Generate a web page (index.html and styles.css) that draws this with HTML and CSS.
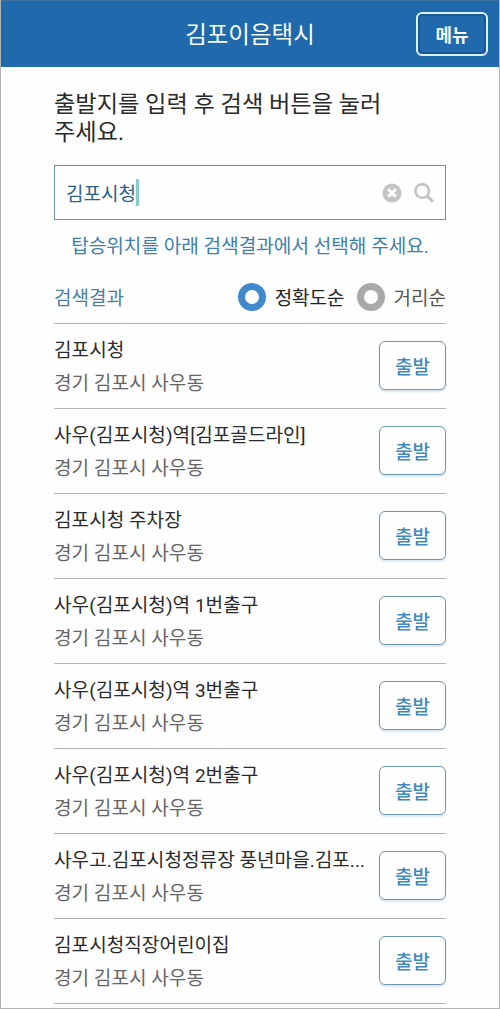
FILE: index.html
```html
<!DOCTYPE html>
<html lang="ko">
<head>
  <meta charset="UTF-8">
  <title>김포이음택시</title>
  <meta name="viewport" content="width=device-width, initial-scale=1.0">
  <link rel="stylesheet" href="styles.css">
</head>
<body>
  <header>
    <h1>김포이음택시</h1>
    <button class="menu-btn">메뉴</button>
  </header>

  <main>
    <p class="guide">출발지를 입력 후 검색 버튼을 눌러<br>주세요.</p>

    <div class="search-box">
      <span class="keyword">김포시청</span>
      <span class="caret"></span>
      <svg class="icon-clear" viewBox="0 0 20 20" width="20" height="20">
        <circle cx="10" cy="10" r="9.6" fill="#c4c4c4"/>
        <path d="M6.2 6.2L13.8 13.8M13.8 6.2L6.2 13.8" stroke="#fff" stroke-width="3"/>
      </svg>
      <svg class="icon-search" viewBox="0 0 20 20" width="20" height="20" fill="none" stroke="#c4c4c4">
        <circle cx="8.2" cy="8" r="6.8" stroke-width="2.6"/>
        <path d="M12.8 12.6L19 18.8" stroke-width="3"/>
      </svg>
    </div>
    <p class="notice">탑승위치를 아래 검색결과에서 선택해 주세요.</p>

    <div class="result-head">
      <span class="result-title">검색결과</span>
      <label class="sort on"><i></i>정확도순</label>
      <label class="sort"><i></i>거리순</label>
    </div>

    <ul class="result-list">
      <li>
        <div class="place"><strong>김포시청</strong><span>경기 김포시 사우동</span></div>
        <button>출발</button>
      </li>
      <li>
        <div class="place"><strong>사우(김포시청)역[김포골드라인]</strong><span>경기 김포시 사우동</span></div>
        <button>출발</button>
      </li>
      <li>
        <div class="place"><strong>김포시청 주차장</strong><span>경기 김포시 사우동</span></div>
        <button>출발</button>
      </li>
      <li>
        <div class="place"><strong>사우(김포시청)역 1번출구</strong><span>경기 김포시 사우동</span></div>
        <button>출발</button>
      </li>
      <li>
        <div class="place"><strong>사우(김포시청)역 3번출구</strong><span>경기 김포시 사우동</span></div>
        <button>출발</button>
      </li>
      <li>
        <div class="place"><strong>사우(김포시청)역 2번출구</strong><span>경기 김포시 사우동</span></div>
        <button>출발</button>
      </li>
      <li>
        <div class="place"><strong>사우고.김포시청정류장 풍년마을.김포...</strong><span>경기 김포시 사우동</span></div>
        <button>출발</button>
      </li>
      <li>
        <div class="place"><strong>김포시청직장어린이집</strong><span>경기 김포시 사우동</span></div>
        <button>출발</button>
      </li>
    </ul>
  </main>
</body>
</html>
```
FILE: styles.css
```css
* {
  box-sizing: border-box;
}
body {
  margin: 0;
  height: 1009px;
  overflow: hidden;
  border: 1px solid #b4b4b4;
  border-top: none;
  background: #fefefe;
  color: #2b2b2b;
  font-family: Roboto, "Noto Sans CJK KR", sans-serif;
}
h1, p, ul {
  margin: 0;
  padding: 0;
}
button {
  padding: 0;
  font-family: inherit;
  cursor: pointer;
}
header {
  display: grid;
  grid-template-columns: 1fr auto 1fr;
  align-items: center;
  height: 67px;
  margin: 0 -1px;
  padding: 0 12px;
  background: #2169ad;
  border-top: 1px solid #3d6f9f;
}
h1 {
  grid-column: 2;
  padding-top: 1px;
  color: #f4fcff;
  font-size: 23.5px;
  font-weight: 400;
  line-height: 34px;
}
.menu-btn {
  justify-self: end;
  width: 72px;
  height: 44px;
  border: 2px solid #d9f2ff;
  border-radius: 6px;
  background: #2169ad;
  box-shadow: inset 0 0 0 2px #1c5793;
  color: #f4fcff;
  font-size: 18px;
  font-weight: 700;
}
main {
  padding: 23px 53px 0;
}
.guide {
  font-size: 23.2px;
  line-height: 28px;
  white-space: nowrap;
}
.search-box {
  display: flex;
  align-items: center;
  height: 55px;
  margin-top: 19px;
  padding: 0 11px;
  border: 1px solid #6c93a3;
}
.keyword {
  color: #2f5f85;
  font-size: 19px;
}
.caret {
  width: 3px;
  height: 27px;
  background: #86ccc9;
}
.icon-clear {
  margin-left: auto;
}
.icon-search {
  margin-left: 12px;
}
.notice {
  margin-top: 13px;
  color: #3f7fab;
  font-size: 19.1px;
  line-height: 28px;
  text-align: center;
  white-space: nowrap;
}
.result-head {
  display: flex;
  align-items: center;
  height: 52px;
  margin-top: 11px;
  padding-bottom: 2px;
  border-bottom: 1px solid #b2b2b2;
  font-size: 19px;
}
.result-title {
  margin-right: auto;
  color: #4a7f9f;
}
.sort {
  display: flex;
  align-items: center;
  color: #555;
}
.sort + .sort {
  margin-left: 12px;
}
.sort i {
  width: 28px;
  height: 28px;
  margin-right: 9px;
  border: 7px solid #a9a9a9;
  border-radius: 50%;
}
.sort.on {
  color: #222;
}
.sort.on i {
  border-color: #4189cd;
}
.result-list {
  list-style: none;
}
.result-list li {
  display: flex;
  justify-content: space-between;
  align-items: center;
  height: 85px;
  border-bottom: 1px solid #b2b2b2;
}
.place {
  padding-top: 3px;
  font-size: 19.1px;
  line-height: 32.5px;
  white-space: nowrap;
}
.place strong {
  display: block;
  font-weight: 400;
}
.place span {
  color: #666;
}
.result-list button {
  flex: none;
  width: 67px;
  height: 49px;
  margin-bottom: 1px;
  border: 1.5px solid #7095b0;
  border-radius: 6px;
  background: #fefefe;
  box-shadow: 0 2px 2px #dbe6f0;
  color: #4189bd;
  font-size: 19px;
  font-weight: 500;
}
```
